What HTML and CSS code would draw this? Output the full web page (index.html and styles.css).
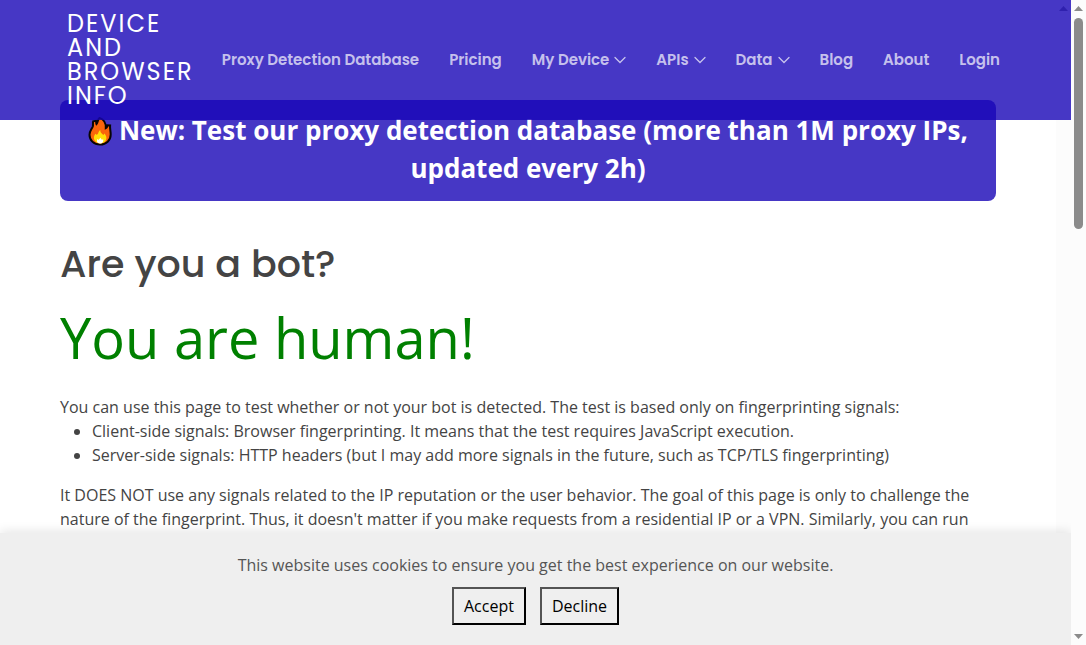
FILE: index.html
```html
<!DOCTYPE html>
<html lang="en">
<head>
<meta charset="utf-8">
<meta name="viewport" content="width=device-width, initial-scale=1">
<title>Are you a bot?</title>
<link rel="stylesheet" href="styles.css">
</head>
<body>
<div class="viewport">
  <div class="frame">
    <header class="header">
      <a class="logo" href="#">DEVICE AND BROWSER INFO</a>
      <nav class="nav">
        <a href="#">Proxy Detection Database</a>
        <a href="#">Pricing</a>
        <a href="#">My Device <svg class="chevron" viewBox="0 0 12 12"><path d="M1 3.500 6 8.500l5-5"/></svg></a>
        <a href="#">APIs <svg class="chevron" viewBox="0 0 12 12"><path d="M1 3.500 6 8.500l5-5"/></svg></a>
        <a href="#">Data <svg class="chevron" viewBox="0 0 12 12"><path d="M1 3.500 6 8.500l5-5"/></svg></a>
        <a href="#">Blog</a>
        <a href="#">About</a>
        <a href="#">Login</a>
      </nav>
    </header>
    <main class="content">
      <a class="promo" href="#"><svg class="flame" viewBox="0 0 24 30"><path d="M12.200 28.500C5.500 28.500 1.500 24 1.500 18.800c0-4 2.300-5.600 3.300-8.300.5-1.500-.2-3 .4-5.200L8 4.800c.3 1.200.1 2.300.5 3.200C10 6.500 9.400 3.800 11.500 2c3.900 1 6.500 5 6.300 10 1.100-.6 1.500-1.600 1.600-2.700l2.700.2c-.3 3 .6 5.600.6 9 0 5.800-4.500 10-10.500 10z" fill="#f9650b" stroke="#080504" stroke-width="2"/><path d="M12.200 27.400c-4 0-6.300-2.700-6.300-5.800 0-1.800.8-2.900 1.600-3.900.7 1.200 1.400 1.200 2 .6 1-1 .8-2.900 2.800-4.300-.2 3 1.900 3.300 3 5 .5-.4.700-.9.800-1.600 1.400 1 2.300 2.600 2.300 4.300 0 3.300-2.500 5.700-6.200 5.700z" fill="#ffdf08"/><path d="M12.300 27.400c-2.100 0-3.400-1-3.400-2.500 0-.8.300-1.300.8-1.800l1 .8 1.600-2.200 1.500 2 1.400-.5c.5 2.400-.7 4.200-2.900 4.200z" fill="#fff"/></svg> New: Test our proxy detection database (more than 1M proxy IPs, updated every 2h)</a>
      <h1>Are you a bot?</h1>
      <p class="result">You are human!</p>
      <p class="intro">You can use this page to test whether or not your bot is detected. The test is based only on fingerprinting signals:</p>
      <ul>
        <li>Client-side signals: Browser fingerprinting. It means that the test requires JavaScript execution.</li>
        <li>Server-side signals: HTTP headers (but I may add more signals in the future, such as TCP/TLS fingerprinting)</li>
      </ul>
      <p>It DOES NOT use any signals related to the IP reputation or the user behavior. The goal of this page is only to challenge the nature of the fingerprint. Thus, it doesn't matter if you make requests from a residential IP or a VPN. Similarly, you can run</p>
    </main>
    <div class="scrollbar"><span class="arrow-up"></span></div>
    <section class="cookies" aria-label="Cookies">
      <p>This website uses cookies to ensure you get the best experience on our website.</p>
      <div class="actions">
        <button type="button">Accept</button>
        <button type="button">Decline</button>
      </div>
    </section>
  </div>
  <div class="scrollbar outer"><span class="arrow-up"></span><span class="thumb"></span><span class="arrow-down"></span></div>
</div>
</body>
</html>
```
FILE: styles.css
```css
* { box-sizing: border-box; }
body {
  margin: 0;
  font: 16px/24px "Open Sans", sans-serif;
  color: #444;
  background: #fff;
}
.viewport {
  display: grid;
  grid-template-columns: minmax(0, 1fr) 15px;
  height: 100vh;
  overflow: hidden;
}
.frame {
  position: relative;
  display: grid;
  grid-template-columns: minmax(0, 1fr) 15px;
  min-height: 0;
  overflow: hidden;
}
.header {
  position: absolute;
  z-index: 2;
  top: 0;
  left: 0;
  right: 0;
  display: flex;
  align-items: center;
  justify-content: space-between;
  padding: 12px 71px 12px 67px;
  background: rgba(24, 5, 182, .8);
  font-family: Poppins, Inter, sans-serif;
}
.logo {
  width: 124px;
  color: #fff;
  font-size: 24px;
  line-height: 24px;
  letter-spacing: 2px;
  text-decoration: none;
}
.nav {
  display: flex;
  gap: 30px;
  white-space: nowrap;
}
.nav a {
  display: flex;
  align-items: center;
  gap: 5px;
  color: rgba(255, 255, 255, .7);
  font-size: 15px;
  font-weight: 600;
  text-decoration: none;
}
.chevron {
  width: 12px;
  height: 12px;
  fill: none;
  stroke: currentColor;
  stroke-width: 1.3;
  stroke-linecap: round;
}
.content { padding: 100px 60px 0; }
.promo {
  display: block;
  padding: 11px 24px 14px;
  border-radius: 8px;
  background: #4637c5;
  color: #fff;
  font-size: 26px;
  font-weight: 700;
  line-height: 38px;
  text-align: center;
  text-decoration: none;
}
.flame {
  width: 24px;
  height: 30px;
  vertical-align: -6px;
}
h1 {
  margin: 39px 0 0;
  font: 500 38px/48px Poppins, Inter, sans-serif;
}
.result {
  margin: 6px 0 14px;
  color: green;
  font-size: 56px;
  line-height: 87px;
}
p { margin: 0; }
p.result { margin: 6px 0 14px; }
ul {
  margin: 0 0 16px;
  padding-left: 32px;
}
.scrollbar {
  display: flex;
  flex-direction: column;
  align-items: center;
  gap: 7px;
  padding: 6px 0;
  background: #fcfcfc;
}
.arrow-up, .arrow-down {
  width: 9px;
  height: 5px;
  background: #8b8b8b;
}
.arrow-up { clip-path: polygon(50% 0, 100% 100%, 0 100%); }
.arrow-down {
  margin-top: auto;
  clip-path: polygon(0 0, 100% 0, 50% 100%);
}
.thumb {
  width: 9px;
  height: 33.3%;
  border-radius: 5px;
  background: #8b8b8b;
}
.cookies {
  position: absolute;
  z-index: 3;
  right: 0;
  bottom: 0;
  left: 0;
  padding: 20px;
  background: #efefef;
  box-shadow: 0 -2px 10px rgba(0, 0, 0, .1);
  color: #555;
  text-align: center;
}
.actions {
  display: flex;
  justify-content: center;
  gap: 14px;
  margin-top: 10px;
}
button {
  padding: 5px 10px;
  border: 2px outset #000;
  background: #efefef;
  color: #000;
  font: inherit;
}
```
